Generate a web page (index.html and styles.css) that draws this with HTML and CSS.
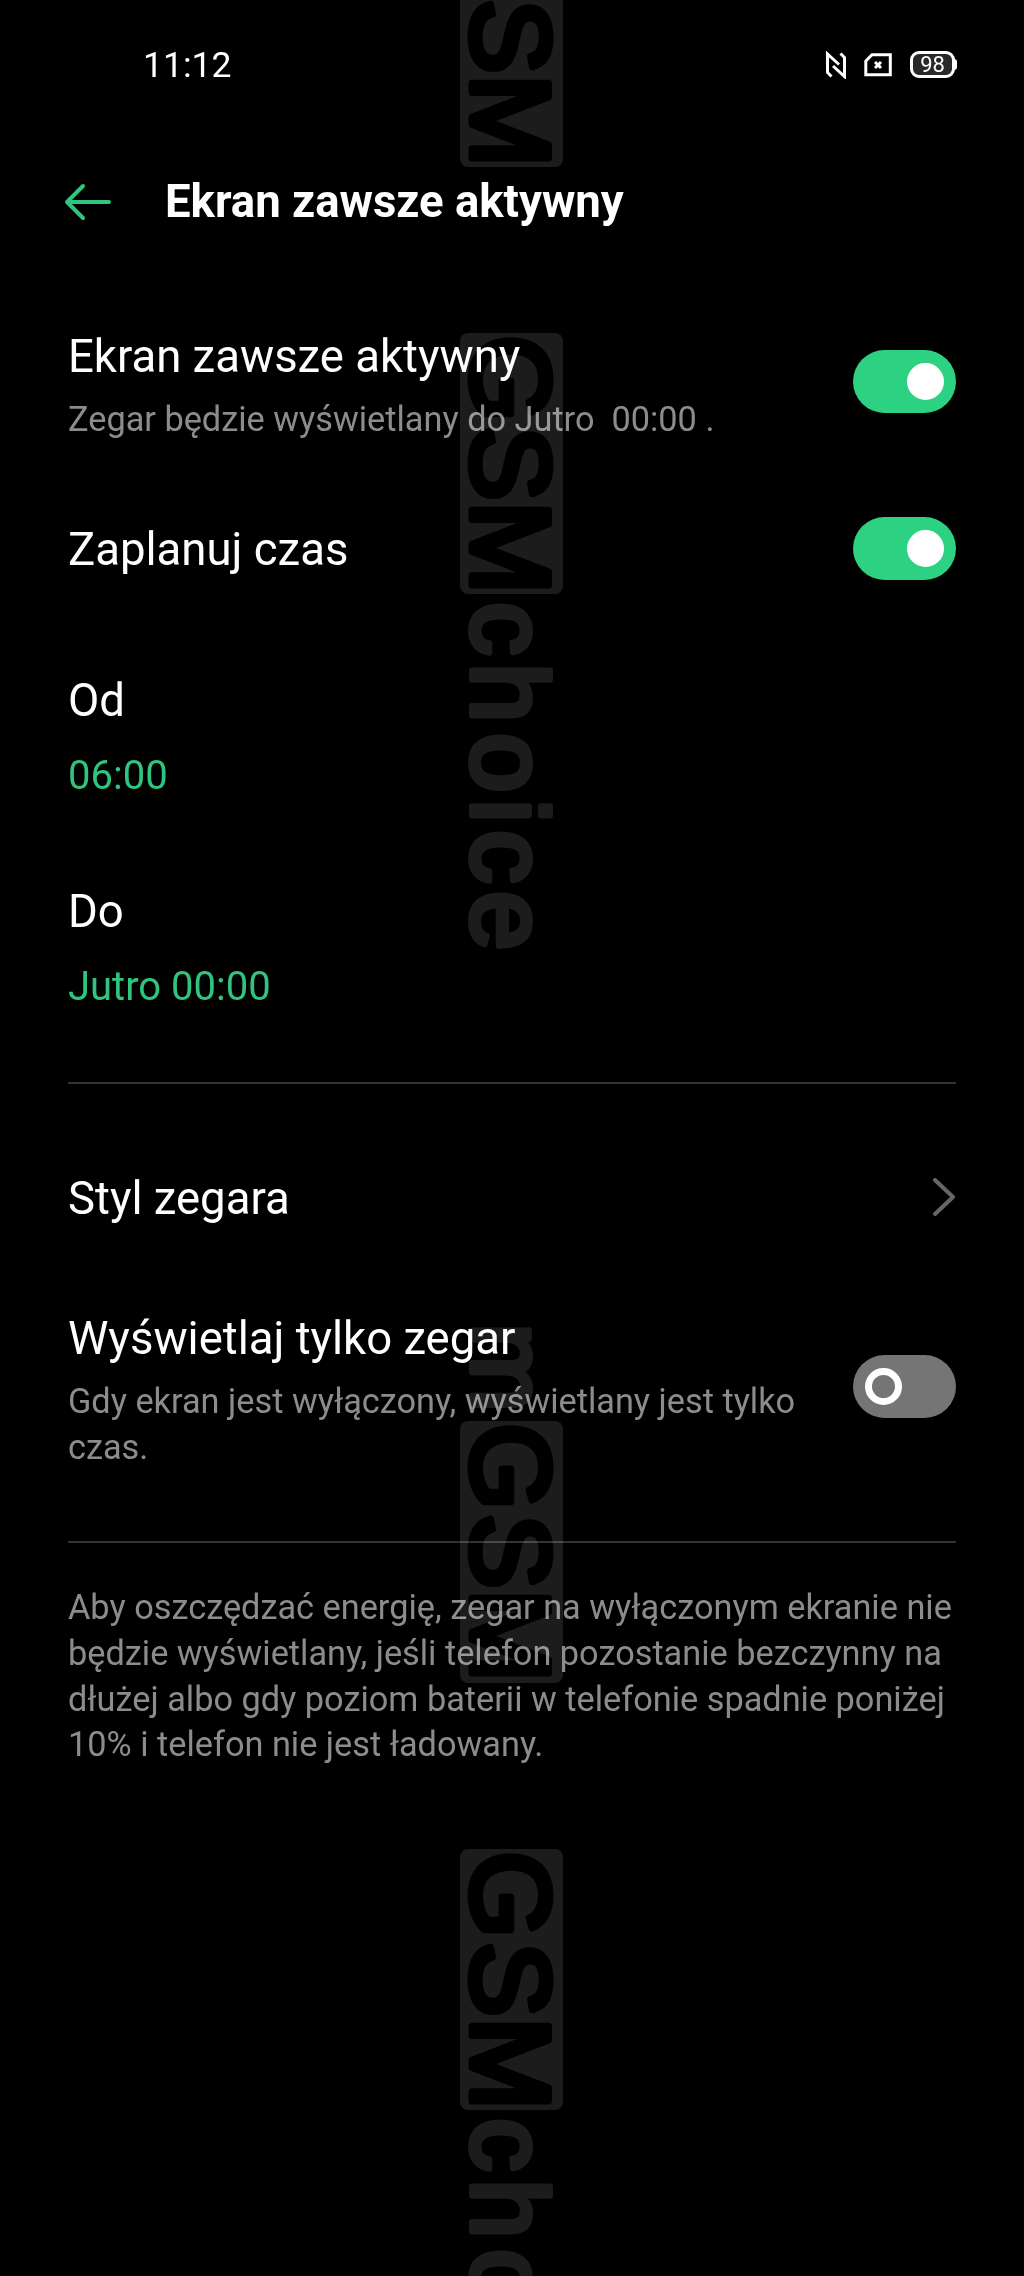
FILE: index.html
```html
<!DOCTYPE html>
<html lang="pl">

<head>
  <meta charset="UTF-8">
  <meta name="viewport" content="width=device-width, initial-scale=1.0">
  <title>Ekran zawsze aktywny</title>
  <link rel="stylesheet" href="styles.css">
</head>

<body>
  <div class="statusBar">
    <span class="clock">11:12</span>
    <div class="statusIcons">
      <svg class="nfc" width="22" height="28" viewBox="0 0 22 28">
        <path d="M6.500 25.500L2.500 21.500V3L14 13.500M15.500 2.500L19.500 6.500V25.500L8 15" />
      </svg>
      <svg class="sim" width="28" height="24" viewBox="0 0 28 24">
        <path d="M8 1.800H26.300V21.800H1.800V8Z" />
        <path class="simCross" d="M11 9L17 15M17 9L11 15" />
      </svg>
      <div class="battery">98</div>
    </div>
  </div>

  <header>
    <svg class="back" width="48" height="38" viewBox="0 0 48 38">
      <path d="M19 3L3 19L19 35M3 19H45" />
    </svg>
    <h1>Ekran zawsze aktywny</h1>
  </header>

  <main>
    <div class="row rowAod">
      <div class="label">
        <h2>Ekran zawsze aktywny</h2>
        <p>Zegar będzie wyświetlany do Jutro&nbsp; 00:00 .</p>
      </div>
      <div class="toggle on"></div>
    </div>
    <div class="row rowPlan">
      <h2>Zaplanuj czas</h2>
      <div class="toggle on"></div>
    </div>
    <div class="times">
      <div class="timeField">
        <h2>Od</h2>
        <span class="time">06:00</span>
      </div>
      <div class="timeField">
        <h2>Do</h2>
        <span class="time">Jutro 00:00</span>
      </div>
    </div>
    <hr>
    <div class="row rowStyle">
      <h2>Styl zegara</h2>
      <svg class="chevron" width="24" height="40" viewBox="0 0 24 40">
        <path d="M3 2L21 19L3 36" />
      </svg>
    </div>
    <div class="row rowOnly">
      <div class="label">
        <h2>Wyświetlaj tylko zegar</h2>
        <p>Gdy ekran jest wyłączony, wyświetlany jest tylko czas.</p>
      </div>
      <div class="toggle"></div>
    </div>
    <hr>
    <p class="note">Aby oszczędzać energię, zegar na wyłączonym ekranie nie będzie wyświetlany, jeśli telefon pozostanie bezczynny na dłużej albo gdy poziom baterii w telefonie spadnie poniżej 10% i telefon nie jest ładowany.</p>
  </main>

  <!-- vertical watermark over the whole screen -->
  <svg class="watermark" width="1024" height="2276" viewBox="0 0 1024 2276">
    <g transform="translate(472 -94) rotate(90)">
      <rect x="0" y="-91" width="261" height="103" rx="8" />
      <text class="cut" x="2 93 168">GSM</text>
    </g>
    <g transform="translate(472 333) rotate(90)">
      <rect x="0" y="-91" width="261" height="103" rx="8" />
      <text class="cut" x="2 93 168">GSM</text>
      <text x="269 330 400 466 497 558">choice</text>
    </g>
    <g transform="translate(472 1421) rotate(90)">
      <text x="-98">m</text>
      <rect x="0" y="-91" width="262" height="103" rx="8" />
      <text class="cut" x="2 93 168">GSM</text>
    </g>
    <g transform="translate(472 1849) rotate(90)">
      <rect x="0" y="-91" width="261" height="103" rx="8" />
      <text class="cut" x="2 93 168">GSM</text>
      <text x="269 330 400">cho</text>
    </g>
  </svg>
</body>

</html>
```
FILE: styles.css
```css
* {
  box-sizing: border-box;
}

body {
  position: relative;
  width: 1024px;
  height: 2276px;
  margin: 0;
  background-color: #000;
  color: #fff;
  font-family: Roboto, sans-serif;
  overflow: hidden;
}

h1, h2, p {
  margin: 0;
}

svg {
  display: block;
  fill: none;
  stroke: #fff;
}

.statusBar {
  display: flex;
  justify-content: space-between;
  align-items: center;
  height: 129px;
  padding: 0 69px 0 143px;
}

.clock {
  font-size: 35.5px;
}

.statusIcons {
  display: flex;
  align-items: center;
  gap: 17px;
}

.nfc, .sim {
  stroke-width: 3;
}

.sim {
  margin-right: 1px;
}

.simCross {
  stroke-width: 3;
}

.battery {
  position: relative;
  width: 45px;
  height: 27px;
  border: 3px solid #fff;
  border-radius: 9px;
  background-color: #292929;
  font-size: 22px;
  line-height: 21px;
  text-align: center;
}

/* battery tip */
.battery::after {
  content: "";
  position: absolute;
  right: -5px;
  top: 5px;
  width: 3px;
  height: 11px;
  border-radius: 0 3px 3px 0;
  background-color: #fff;
}

header {
  display: flex;
  align-items: center;
  gap: 53px;
  height: 145px;
  margin-bottom: 2px;
  padding-left: 64px;
}

.back {
  stroke: #2fc57e;
  stroke-width: 4;
  stroke-linecap: round;
  stroke-linejoin: round;
}

h1 {
  font-size: 45.5px;
  line-height: 54px;
  font-weight: 700;
}

main {
  padding: 0 68px;
}

h2 {
  font-size: 45.5px;
  line-height: 54px;
  font-weight: 400;
}

p {
  color: #8c8c8c;
  font-size: 34.3px;
  line-height: 46px;
}

.row {
  display: flex;
  justify-content: space-between;
  align-items: center;
}

.label {
  padding-top: 8px;
}

.label p {
  margin-top: 12px;
}

.rowAod {
  height: 211px;
}

.rowPlan {
  height: 122px;
}

.rowPlan h2 {
  padding-top: 4px;
}

.rowStyle {
  height: 148px;
}

.rowStyle h2 {
  padding-top: 2px;
}

.rowOnly {
  height: 229px;
}

.rowOnly .label {
  width: 740px;
}

.toggle {
  flex: none;
  width: 103px;
  height: 63px;
  padding: 13px 12px;
  border-radius: 32px;
  background-color: #757575;
}

.toggle::before {
  content: "";
  display: block;
  box-sizing: border-box;
  width: 37px;
  height: 37px;
  border: 7.5px solid #fff;
  border-radius: 50%;
}

.toggle.on {
  background-color: #2cd282;
}

.toggle.on::before {
  margin-left: auto;
  background-color: #fff;
}

.times {
  padding-bottom: 11px;
}

.timeField {
  height: 211px;
  padding-top: 65px;
}

.time {
  display: block;
  margin-top: 24px;
  color: #2fc57e;
  font-size: 40px;
  line-height: 48px;
}

hr {
  height: 2px;
  margin: 40px 0;
  border: 0;
  background-color: #333;
}

.chevron {
  stroke: #666;
  stroke-width: 4;
  stroke-linecap: round;
  stroke-linejoin: round;
}

.note {
  padding-top: 2px;
  line-height: 45.8px;
}

.watermark {
  position: absolute;
  top: 0;
  left: 0;
  mix-blend-mode: screen;
  font-family: "Liberation Sans", Arial, sans-serif;
  font-size: 107px;
}

.watermark rect {
  fill: #1c1c1c;
  stroke: none;
}

.watermark text {
  fill: #1c1c1c;
  stroke: #1c1c1c;
  stroke-width: 6;
  stroke-linejoin: round;
}

.watermark .cut {
  fill: #000;
  stroke: #000;
  stroke-width: 7;
  font-size: 112px;
}
```
